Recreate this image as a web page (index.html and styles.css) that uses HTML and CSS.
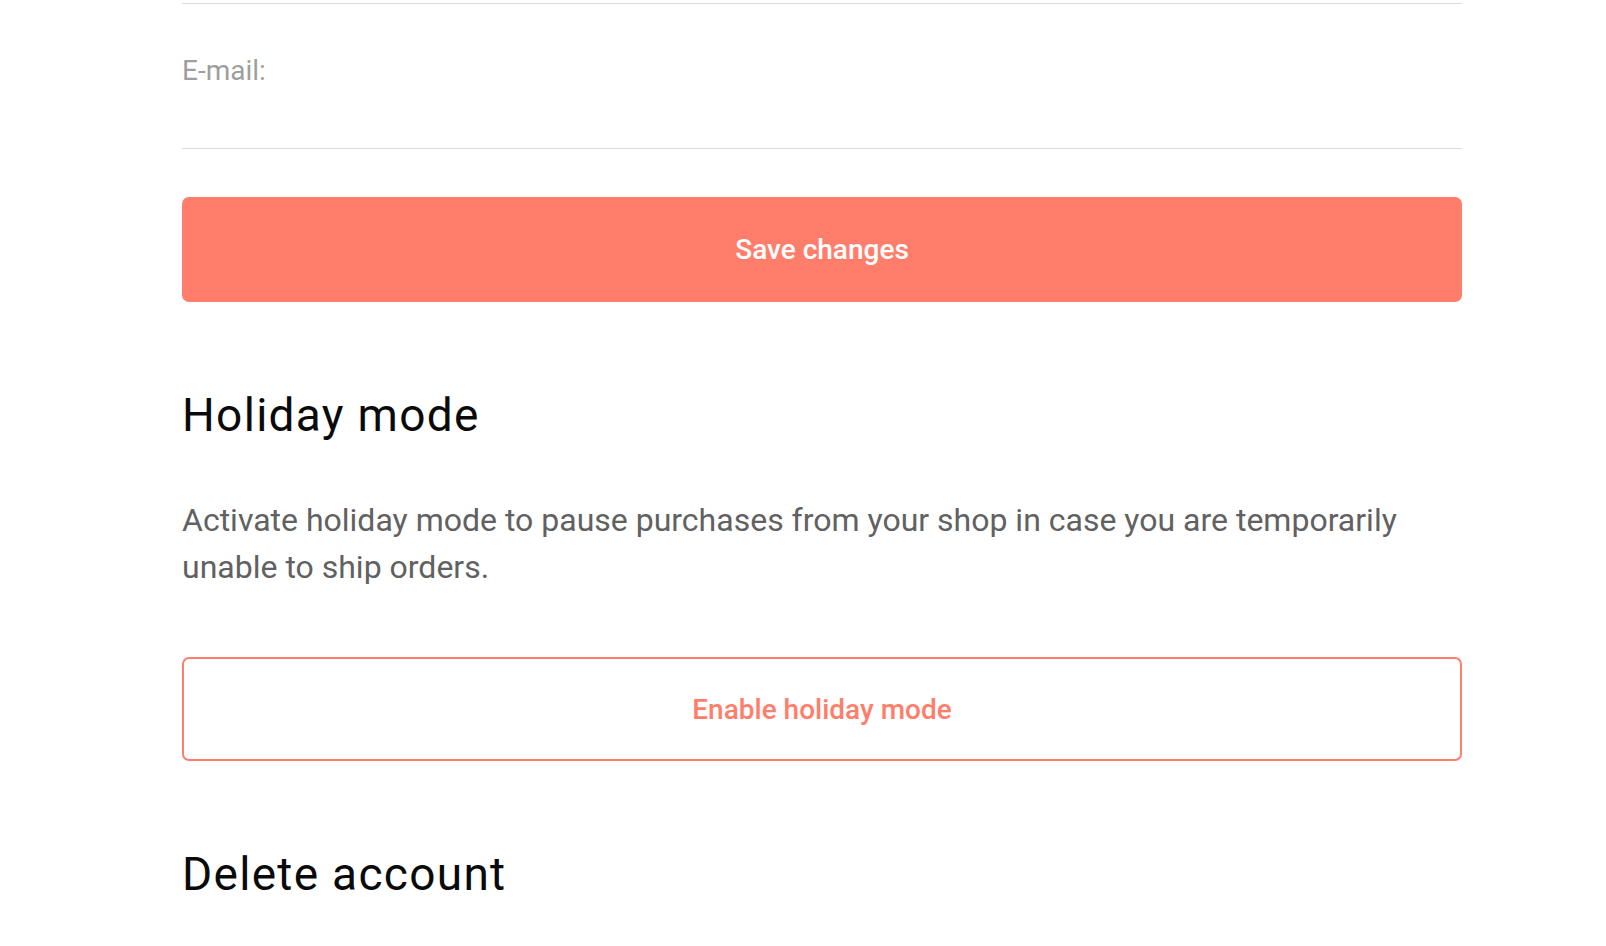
FILE: index.html
```html
<!DOCTYPE html>
<html lang="en">
<head>
<meta charset="utf-8">
<title>Account settings</title>
<link rel="stylesheet" href="styles.css">
</head>
<body>
<main class="page">
  <div class="divider"></div>
  <div class="field">
    <label class="field-label" for="email">E-mail:</label>
    <input class="field-input" id="email" type="email">
  </div>
  <button class="btn btn-primary" type="button">Save changes</button>

  <section class="section">
    <h2 class="section-title">Holiday mode</h2>
    <p class="section-text">Activate holiday mode to pause purchases from your shop in case you are temporarily unable to ship orders.</p>
    <button class="btn btn-outline" type="button">Enable holiday mode</button>
  </section>

  <section class="section section-delete">
    <h2 class="section-title">Delete account</h2>
  </section>
</main>
</body>
</html>
```

FILE: styles.css
```css
html, body {
  margin: 0;
  padding: 0;
  background: #ffffff;
}

body {
  font-family: Roboto, "Liberation Sans", Arial, sans-serif;
  overflow: hidden;
}

.page {
  width: 1280px;
  margin-left: 182px;
  padding-top: 3px;
  display: flex;
  flex-direction: column;
}

.divider {
  height: 1px;
  background: #dcdcdc;
}

.field {
  display: flex;
  flex-direction: column;
  padding-top: 50px;
  border-bottom: 1px solid #dcdcdc;
}

.field-label {
  font-size: 28px;
  line-height: 33px;
  color: #9e9e9e;
}

.field-input {
  height: 61px;
  border: none;
  padding: 0;
  margin: 0;
  font: inherit;
  font-size: 28px;
  outline: none;
  background: transparent;
}

.btn {
  display: flex;
  align-items: center;
  justify-content: center;
  width: 100%;
  margin: 0;
  font-family: Roboto, "Liberation Sans", Arial, sans-serif;
  font-size: 28px;
  font-weight: 500;
  border-radius: 7px;
  cursor: pointer;
}

.btn-primary {
  margin-top: 48px;
  height: 105px;
  background: #ff7e6b;
  color: #ffffff;
  border: none;
}

.btn-outline {
  margin-top: 66px;
  height: 104px;
  background: #ffffff;
  color: #ff7e6b;
  border: 2px solid #ff7e6b;
}

.section {
  display: flex;
  flex-direction: column;
  margin-top: 85px;
}

.section-delete {
  margin-top: 85px;
}

.section-title {
  margin: 0;
  font-size: 46px;
  line-height: 56px;
  font-weight: 400;
  letter-spacing: 1.3px;
  color: #0a0a0a;
}

.section-text {
  margin: 54px 0 0;
  font-size: 32px;
  line-height: 47px;
  color: #616161;
}
```
